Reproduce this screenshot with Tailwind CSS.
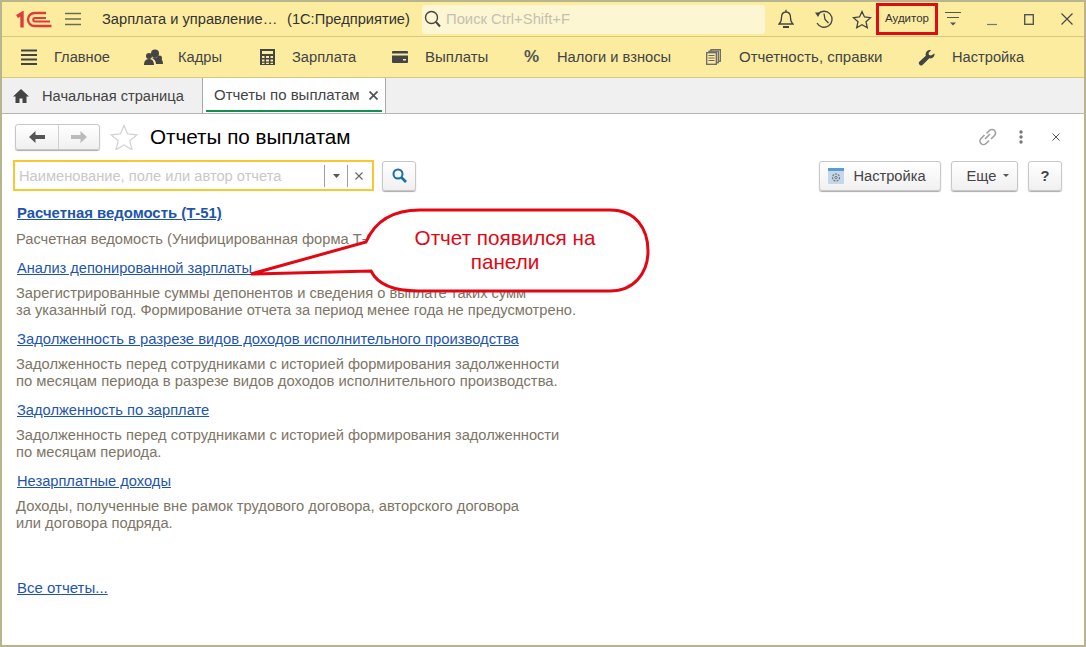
<!DOCTYPE html>
<html lang="ru"><head><meta charset="utf-8"><script src="https://cdn.jsdelivr.net/npm/@tailwindcss/browser@4"></script></head>
<body class="m-0 bg-white">
<div class="relative w-[1086px] h-[647px] overflow-hidden bg-white border-l-2 border-r-2 border-t-2 border-b-2 border-[#b8b48e] font-['Liberation_Sans',Arial,sans-serif] text-[14.67px] text-[#333]">
  <!-- title bar -->
  <div class="flex items-center h-[35px] bg-[#fbeca0] border-b border-[#d6c97f]">
    <svg class="ml-[14px] flex-none" width="36" height="17" viewBox="0 0 36 17" fill="none" stroke="#e23a3a" stroke-width="2"><path d="M1 5.500 6 2.500V16.500" stroke-width="3.400"/><path d="M30 2H18.500a6.500 6.500 0 0 0 0 13H35.500" stroke-width="2.400"/><path d="M30 7H19a1.700 1.700 0 0 0 0 3.500H34" stroke-width="2"/></svg>
    <svg class="ml-[13px] flex-none" width="16" height="14" viewBox="0 0 16 14" stroke="#6b6b55" stroke-width="1.600"><path d="M0 1.500H16M0 7H16M0 12.500H16"/></svg>
    <span class="ml-[21px] w-[185px] flex-none whitespace-nowrap">Зарплата и управление…</span>
    <span class="whitespace-nowrap w-[135px] flex-none">(1С:Предприятие)</span>
    <div class="flex items-center h-[29px] w-[343px] flex-none rounded-[3px] bg-[#fdf6d2] text-[#c4c1b0]">
      <svg class="ml-[2px] flex-none" width="18" height="18" viewBox="0 0 18 18" fill="none" stroke="#444" stroke-width="1.400"><circle cx="7.500" cy="7.500" r="6"/><path d="m12 12 4 4.500" stroke-width="2"/></svg>
      <span class="ml-[4px] text-[14.800px] whitespace-nowrap">Поиск Ctrl+Shift+F</span>
    </div>
    <svg class="ml-[13px] flex-none" width="16" height="20" viewBox="0 0 16 20" fill="none" stroke="#444" stroke-width="1.300"><path d="M1 15c2-1.500 2.500-3.500 2.500-6.500S5 3 8 3s4.500 2.500 4.500 5.500S13 13.500 15 15z"/><path d="M8 .8V3"/><path d="M5 18h6" stroke-width="2"/></svg>
    <svg class="ml-[20px] flex-none" width="21" height="20" viewBox="0 0 21 20" fill="none" stroke="#444" stroke-width="1.300"><path d="M4 5A8 8 0 1 1 3 14"/><path d="M1 3.500h5.500L4 8z" fill="#444" stroke="none"/><path d="M10 4.500 11 10.500 14.500 14"/></svg>
    <svg class="ml-[17px] flex-none" width="20" height="19" viewBox="0 0 20 19" fill="none" stroke="#444" stroke-width="1.300"><path d="m10 1.500 2.500 5.500 6 .7-4.500 4 1.300 6L10 14.700 4.700 17.700l1.300-6-4.500-4 6-.7z"/></svg>
    <div class="ml-[4px] flex-none flex items-center justify-center w-[62px] h-[32px] border-[3px] border-[#e00c14] text-[11.500px] text-[#333] whitespace-nowrap">Аудитор</div>
    <svg class="ml-[7px] flex-none" width="16" height="17" viewBox="0 0 16 17" fill="#555" stroke="#555"><path d="M0 1.500H16M2 6.500H14" fill="none"/><path d="M5 11.500h6l-3 3z" stroke="none"/></svg>
    <svg class="ml-[25px] flex-none" width="12" height="14" viewBox="0 0 12 14" stroke="#777" stroke-width="1.200"><path d="M1 12.500H11"/></svg>
    <svg class="ml-[26px] flex-none" width="10" height="11" viewBox="0 0 10 11" fill="none" stroke="#555" stroke-width="1.400"><rect x=".7" y=".7" width="8.600" height="9.600"/></svg>
    <svg class="ml-[27px] flex-none" width="12" height="12" viewBox="0 0 12 12" stroke="#444" stroke-width="1.100"><path d="m.5.500 11 11M11.500.500l-11 11"/></svg>
  </div>
  <!-- section bar -->
  <div class="flex items-center h-[41px] pl-[18px] bg-[#fbeca0] border-b border-[#d6c97f] text-[#444]">
    <div class="flex items-center w-[124px] flex-none">
      <div class="w-[34px] flex-none pl-[1px]"><svg class="block" width="16" height="16" viewBox="0 0 16 16" stroke="#444" stroke-width="2"><path d="M0 1.500H16M0 6H16M0 10.500H16M0 15H16"/></svg></div><span>Главное</span></div>
    <div class="flex items-center w-[116px] flex-none">
      <div class="w-[34px] flex-none"><svg class="block" width="19" height="17" viewBox="0 0 19 17" fill="#444"><circle cx="11" cy="4.500" r="4"/><circle cx="5" cy="7" r="3"/><circle cx="15.500" cy="9" r="2.500"/><path d="M0 16c0-4 2-6 5-6s5 2 5 6zM8 9c1-1 5-1 6 0 3 0 5 2 5 6h-7c0-3-2-5-4-6z"/></svg></div><span>Кадры</span></div>
    <div class="flex items-center w-[132px] flex-none">
      <div class="w-[32px] flex-none"><svg class="block" width="15" height="16" viewBox="0 0 15 16" fill="#444"><path fill-rule="evenodd" d="M0 0h15v16H0zM2 2v3h11V2zm0 5v2h2.500V7zm4 0v2h3V7zm4.500 0v2H13V7zM2 10.500v2h2.500v-2zm4 0v2h3v-2zm4.500 0v2H13v-2zM2 13.800V15h2.500v-1.200zm4 0V15h3v-1.200zm4.500 0V15H13v-1.200z"/></svg></div><span>Зарплата</span></div>
    <div class="flex items-center w-[132px] flex-none">
      <div class="w-[33px] flex-none"><svg class="block" width="16" height="12" viewBox="0 0 16 12" fill="#444"><path fill-rule="evenodd" d="M1 0h14a1 1 0 0 1 1 1v10a1 1 0 0 1-1 1H1a1 1 0 0 1-1-1V1a1 1 0 0 1 1-1zM0 2.500v2h16v-2zM11 8v1.500h3V8z"/></svg></div><span class="text-[15px]">Выплаты</span></div>
    <div class="flex items-center w-[182px] flex-none">
      <div class="w-[33px] flex-none font-bold text-[17px] leading-none text-[#555]">%</div><span class="text-[14.700px]">Налоги и взносы</span></div>
    <div class="flex items-center w-[212px] flex-none">
      <div class="w-[33px] flex-none"><svg class="block" width="15" height="16" viewBox="0 0 15 16" fill="#fbeca0" stroke="#666" stroke-width="1.300"><rect x="5" y=".7" width="9.300" height="11.500"/><rect x="3" y="2.200" width="9.300" height="11.500"/><rect x=".7" y="3.700" width="9.600" height="11.600"/><path d="M2.500 6.500h6M2.500 9h6M2.500 11.500h6" fill="none" stroke-width="1.100"/></svg></div><span class="text-[15px]">Отчетность, справки</span></div>
    <div class="flex items-center flex-none">
      <div class="w-[34px] flex-none"><svg class="block" width="17" height="17" viewBox="0 0 17 17" fill="#444"><path d="M16.500 4.500c.5 2.500-1.500 5-4 5l-1.200-.2L4.500 16a2 2 0 0 1-3.300-.7C.7 14.500.7 13.700 1 13l6.800-6.300-.2-1.200c0-2.800 2.500-5 5.400-4.300L10.500 4l.5 2 2 .5z"/></svg></div><span>Настройка</span></div>
  </div>
  <!-- tabs -->
  <div class="flex h-[36px] bg-[#f0f0f0] border-b border-[#b5b5b5]">
    <div class="flex items-center w-[201px] flex-none border-r border-[#a8a8a8] pl-[11px] text-[#444]">
      <svg class="flex-none" width="16" height="14" viewBox="0 0 16 14" fill="#444"><path d="M8 0 0 7.500h2.500V14H6.500V9.500h3V14h4V7.500H16z"/></svg>
      <span class="ml-[13px] whitespace-nowrap">Начальная страница</span>
    </div>
    <div class="relative flex items-center w-[183px] flex-none bg-white border-r border-[#a8a8a8] pl-[11px] text-[#444]">
      <span class="text-[15px] whitespace-nowrap">Отчеты по выплатам</span>
      <svg class="ml-[9px] flex-none" width="9" height="9" viewBox="0 0 9 9" stroke="#555" stroke-width="1.800"><path d="m.5.500 8 8M8.500.500l-8 8"/></svg>
      <div class="absolute left-[3px] right-[3px] bottom-[1px] h-[2px] bg-[#0f9150]"></div>
    </div>
  </div>
  <!-- content -->
  <div class="px-[13px]">
    <div class="flex items-center h-[36px] pt-[10px]">
      <div class="flex h-[26px] w-[85px] flex-none border border-[#c8c8c8] rounded-[3px] bg-gradient-to-b from-white to-[#f0f0f0] shadow-[0_1px_1px_#aaa]">
        <div class="flex items-center justify-center w-[43px] border-r border-[#d0d0d0]"><svg width="16" height="12" viewBox="0 0 16 12" fill="#555"><path d="M6.500 0 0 6l6.500 6V8H16V4H6.500z"/></svg></div>
        <div class="flex items-center justify-center flex-1"><svg width="16" height="12" viewBox="0 0 16 12" fill="#bbb"><path d="M9.500 0 16 6l-6.500 6V8H0V4h9.500z"/></svg></div>
      </div>
      <svg class="ml-[10px] flex-none" width="28" height="26" viewBox="0 0 28 26" fill="none" stroke="#d4d4d4" stroke-width="1.300"><path d="m14 1.500 3.600 8.500 9.400.8-7.200 6 2.200 9-8-4.800-8 4.800 2.200-9L1 10.800l9.400-.8z"/></svg>
      <span class="ml-[12px] text-[20.670px] leading-none text-black whitespace-nowrap">Отчеты по выплатам</span>
      <svg class="ml-auto mr-[-1px] flex-none" width="20" height="18" viewBox="0 0 20 18" fill="none" stroke="#a0a0a0" stroke-width="1.600"><path d="M8.500 5.500 11.500 2.500a3.500 3.500 0 0 1 5 5L13 11M11 12.500l-3 3a3.500 3.500 0 0 1-5-5l3.500-3.500M7 11l5-5"/></svg>
      <svg class="ml-[22px] flex-none" width="4" height="14" viewBox="0 0 4 14" fill="#777"><circle cx="2" cy="2" r="1.700"/><circle cx="2" cy="7" r="1.700"/><circle cx="2" cy="12" r="1.700"/></svg>
      <svg class="ml-[29px] mr-[11px] flex-none" width="8" height="8" viewBox="0 0 8 8" stroke="#555" stroke-width="1"><path d="m.5.500 7 7M7.500.500l-7 7"/></svg>
    </div>
    <div class="flex items-center h-[31px] mt-[10px] ml-[-2px] mr-[9px]">
      <div class="flex items-center h-[31px] w-[361px] flex-none border-2 border-[#fbc72e] bg-white">
        <span class="ml-[4px] w-[305px] flex-none text-[#c8c8c8] whitespace-nowrap">Наименование, поле или автор отчета</span>
        <div class="flex items-center justify-center w-[23px] h-[22px] flex-none border-l border-[#a0a0a0]"><svg width="7" height="4" viewBox="0 0 7 4" fill="#555"><path d="M0 0h7L3.500 4z"/></svg></div>
        <div class="flex items-center justify-center w-[23px] h-[22px] flex-none border-l border-[#a0a0a0]"><svg width="8" height="8" viewBox="0 0 8 8" stroke="#666" stroke-width="1.100"><path d="m.5.500 7 7M7.500.500l-7 7"/></svg></div>
      </div>
      <div class="ml-[8px] flex items-center justify-center w-[34px] h-[30px] flex-none border border-[#c8c8c8] rounded-[3px] bg-gradient-to-b from-white to-[#f0f0f0] shadow-[0_1px_1px_#aaa]">
        <svg width="15" height="15" viewBox="0 0 15 15" fill="none" stroke="#1a6fa8" stroke-width="2"><circle cx="6" cy="6" r="4.500"/><path d="m9.500 9.500 4.500 4.500" stroke-width="2.600"/></svg>
      </div>
      <div class="ml-auto flex items-center justify-center gap-[9px] pr-[6px] w-[122px] h-[30px] flex-none border border-[#c8c8c8] rounded-[3px] bg-gradient-to-b from-white to-[#f0f0f0] shadow-[0_1px_1px_#aaa] text-[#444]">
        <svg width="16" height="16" viewBox="0 0 16 16" fill="none"><rect width="16" height="16" rx="1" fill="#c3d8ea"/><rect width="16" height="3" fill="#5b9bd5"/><circle cx="8" cy="9.500" r="3.500" stroke="#777" stroke-width="1.200" stroke-dasharray="2 1"/><circle cx="8" cy="9.500" r="1.200" stroke="#777"/></svg>
        <span>Настройка</span>
      </div>
      <div class="ml-[10px] flex items-center justify-center gap-[7px] pl-[7px] w-[67px] h-[30px] flex-none border border-[#c8c8c8] rounded-[3px] bg-gradient-to-b from-white to-[#f0f0f0] shadow-[0_1px_1px_#aaa] text-[#444]">
        <span>Еще</span><svg width="6" height="3" viewBox="0 0 6 3" fill="#555"><path d="M0 0h6L3 3z"/></svg>
      </div>
      <div class="ml-[10px] flex items-center justify-center w-[34px] h-[30px] flex-none border border-[#c8c8c8] rounded-[3px] bg-gradient-to-b from-white to-[#f0f0f0] shadow-[0_1px_1px_#aaa] font-bold text-[#444]">?</div>
    </div>
    <div class="mt-[14px] leading-[17px] text-[#7d7566]">
      <a class="block pl-[2px] text-[14.900px] font-bold text-[#1d55ad] underline whitespace-nowrap">Расчетная ведомость (Т-51)</a>
      <p class="mt-[9px] pl-[1px] whitespace-nowrap">Расчетная ведомость (Унифицированная форма Т-51)</p>
      <a class="block mt-[12px] pl-[2px] text-[14.600px] text-[#1d55ad] underline whitespace-nowrap">Анализ депонированной зарплаты</a>
      <p class="mt-[8px] pl-[1px] whitespace-nowrap">Зарегистрированные суммы депонентов и сведения о выплате таких сумм<br>за указанный год. Формирование отчета за период менее года не предусмотрено.</p>
      <a class="block mt-[12px] pl-[2px] text-[14.800px] text-[#1d55ad] underline whitespace-nowrap">Задолженность в разрезе видов доходов исполнительного производства</a>
      <p class="mt-[8px] pl-[1px] whitespace-nowrap">Задолженность перед сотрудниками с историей формирования задолженности<br><span class="text-[14.800px]">по месяцам периода в разрезе видов доходов исполнительного производства.</span></p>
      <a class="block mt-[12px] pl-[2px] text-[#1d55ad] underline whitespace-nowrap">Задолженность по зарплате</a>
      <p class="mt-[8px] pl-[1px] whitespace-nowrap">Задолженность перед сотрудниками с историей формирования задолженности<br>по месяцам периода.</p>
      <a class="block mt-[12px] pl-[2px] text-[#1d55ad] underline whitespace-nowrap">Незарплатные доходы</a>
      <p class="mt-[8px] pl-[1px] text-[14.730px] whitespace-nowrap">Доходы, полученные вне рамок трудового договора, авторского договора<br>или договора подряда.</p>
      <a class="block mt-[47px] pl-[2px] text-[15px] text-[#1d55ad] underline whitespace-nowrap">Все отчеты...</a>
    </div>
  </div>
  <!-- callout -->
  <svg class="absolute left-[246px] top-[205px]" width="406" height="88" viewBox="0 0 406 88" fill="white" stroke="#e30613" stroke-width="3"><path d="M3 67 118 35C128 12 148 3 172 3H362C388 3 400 22 400 44S386 84 362 84H170C145 84 130 78 123 64Z"/></svg>
  <div class="absolute left-[368px] top-[224px] w-[270px] text-center text-[20.670px] leading-[24px] text-[#e30613]">Отчет появился на<br>панели</div>
</div>
</body></html>
